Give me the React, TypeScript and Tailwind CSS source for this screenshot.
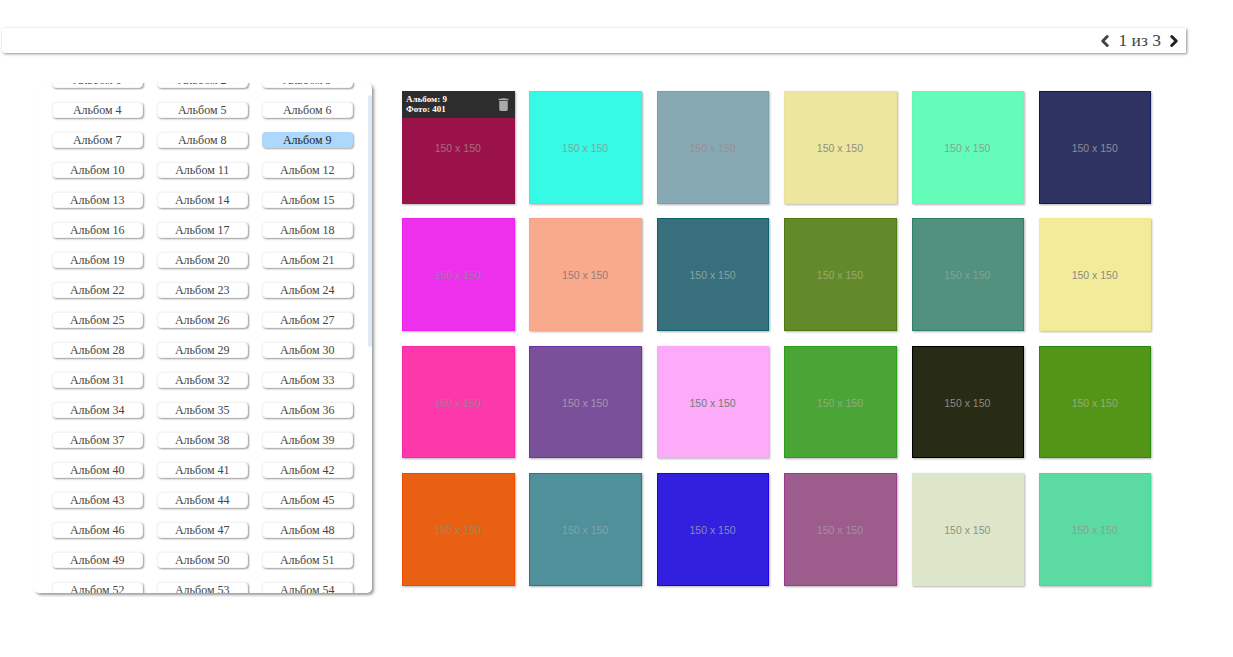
import { ChevronLeft, ChevronRight } from "lucide-react";

const albums = Array.from({ length: 54 }, (_, i) => i + 1);

const tiles = [
  "bg-[#9b124b] border-[#9b124b] text-[#a0707f]",
  "bg-[#36f9e6] border-[#20fbe6] text-[#7fa8a4]",
  "bg-[#86a9b4] border-[#7aa0ae] text-[#9c8f92]",
  "bg-[#ede69f] border-[#e9e39a] text-[#8f8f80]",
  "bg-[#63fdb9] border-[#5cfab3] text-[#8c9f95]",
  "bg-[#2e3362] border-[#0f1a5c] text-[#8b8c9a]",
  "bg-[#ec30ec] border-[#ec22ec] text-[#a878a8]",
  "bg-[#f9a98c] border-[#f9a488] text-[#8f7f78]",
  "bg-[#37707c] border-[#0d6270] text-[#8ba0a4]",
  "bg-[#628a2b] border-[#4a7a10] text-[#9aa870]",
  "bg-[#52917e] border-[#2c8068] text-[#7fa597]",
  "bg-[#f2ec9a] border-[#f0ea94] text-[#8a8a85]",
  "bg-[#fd38ab] border-[#fa2aa6] text-[#a87a95]",
  "bg-[#7b509b] border-[#6a35a0] text-[#a496ae]",
  "bg-[#fbabf8] border-[#fba6f8] text-[#6f8075]",
  "bg-[#4aa436] border-[#2a9e1a] text-[#8fab88]",
  "bg-[#292c15] border-[#000000] text-[#8a8a85]",
  "bg-[#539517] border-[#2a8a10] text-[#93ad7c]",
  "bg-[#e96013] border-[#f04a00] text-[#9c8565]",
  "bg-[#4f909a] border-[#0b8590] text-[#7fa5a8]",
  "bg-[#3220de] border-[#2000e8] text-[#8a86c0]",
  "bg-[#9c5c8c] border-[#9a3a88] text-[#a78fa0]",
  "bg-[#dde6c8] border-[#dde6c8] text-[#8f9187]",
  "bg-[#5cdaa3] border-[#3ce098] text-[#8c9f96]",
];

function App() {
  return (
    <div className="min-h-[657px] bg-white pt-[28px] font-['Liberation_Serif',serif] text-[#444]">
      {/* Pagination bar */}
      <div className="ml-[2px] flex h-[25px] w-[1184px] items-center justify-end gap-[4px] rounded-bl-[3px] rounded-tl-[3px] bg-white pr-[3px] shadow-[1px_1px_3px_rgba(0,0,0,0.45)]">
        <ChevronLeft size={18} strokeWidth={4} className="text-[#444]" />
        <span className="text-[17.5px] leading-none">1 из 3</span>
        <ChevronRight size={18} strokeWidth={4} className="text-[#222]" />
      </div>

      <div className="mt-[30px] flex items-start">
        {/* Album list */}
        <div className="relative ml-[34px] h-[510px] w-[338px] overflow-hidden rounded-[5px] bg-white shadow-[2px_2px_3px_rgba(0,0,0,0.4)]">
          <div className="-mt-[11px] grid grid-cols-[90.5px_90.5px_90.5px] gap-x-[14.5px] gap-y-[14px] pl-[18px]">
            {albums.map((n) => (
              <div
                key={n}
                className={
                  n === 9
                    ? "flex h-[16px] items-center justify-center rounded-[4px] bg-[#aed8fb] text-[12px] leading-none text-[#222] shadow-[1px_1px_2px_rgba(0,0,0,0.35)]"
                    : "flex h-[16px] items-center justify-center rounded-[4px] border border-[#f4f4f4] bg-white text-[12px] leading-none shadow-[1px_1px_2px_rgba(0,0,0,0.4)]"
                }
              >
                Альбом {n}
              </div>
            ))}
          </div>
          <div className="absolute right-0 top-[12px] h-[252px] w-[4px] rounded-[2px] bg-[#dfeaf6]" />
        </div>

        {/* Photos */}
        <div className="ml-[30px] mt-[8px] grid w-[750px] grid-cols-[repeat(6,112.5px)] gap-[14.9px]">
          {tiles.map((cls, i) => (
            <div
              key={i}
              className={`relative flex h-[112.5px] items-center justify-center border pr-[1px] pt-[3px] font-['Liberation_Sans',sans-serif] text-[10.5px] shadow-[1px_1px_2px_rgba(0,0,0,0.3)] ${cls}`}
            >
              150 x 150
              {i === 0 && (
                <div className="absolute -left-px -right-px -top-px flex h-[27px] items-center justify-between bg-[#2d2d2d] pl-[4px] pr-[3px] font-['Liberation_Serif',serif] text-[9px] font-bold leading-[10px] text-white">
                  <div className="-mt-[1px]">
                    Альбом: 9
                    <br />
                    Фото: 401
                  </div>
                  <svg width="17" height="17" viewBox="0 0 24 24" fill="#a9a9a9">
                    <path d="M6 19c0 1.1.9 2 2 2h8c1.1 0 2-.9 2-2V7H6v12zM19 4h-3.5l-1-1h-5l-1 1H5v2h14V4z" />
                  </svg>
                </div>
              )}
            </div>
          ))}
        </div>
      </div>
    </div>
  );
}

export default App;
